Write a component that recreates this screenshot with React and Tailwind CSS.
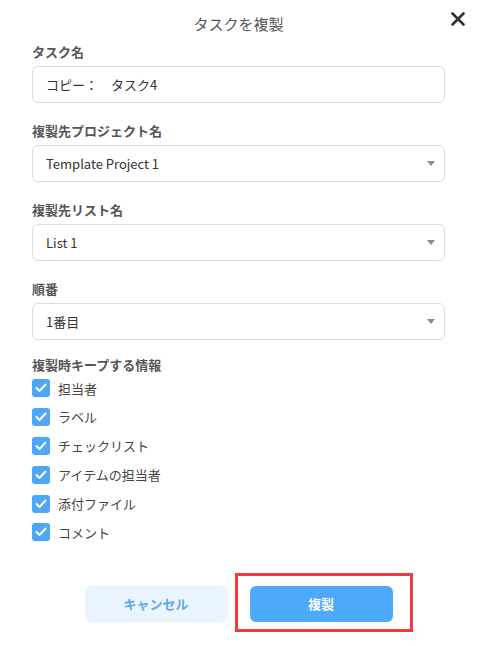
import React, { useState } from "react";

const font = { fontFamily: '"Noto Sans CJK JP", "Noto Sans", sans-serif' };

const keepItems = ["担当者", "ラベル", "チェックリスト", "アイテムの担当者", "添付ファイル", "コメント"];

function Field({ label, children }) {
  return (
    <div className="mb-[18px]">
      <div className="mb-1 h-5 text-[13px] font-bold leading-5 text-[#555]">{label}</div>
      {children}
    </div>
  );
}

function SelectBox({ value }) {
  return (
    <div className="flex h-[37px] items-center justify-between rounded-md border border-[#dcdcdc] bg-white pl-[13px] pr-[9px] text-[13px] text-[#333]">
      <span>{value}</span>
      <svg width="8" height="5" viewBox="0 0 8 5">
        <path d="M0 0h8L4 5z" fill="#8a8a8a" />
      </svg>
    </div>
  );
}

export default function App() {
  const [checked, setChecked] = useState(keepItems.map(() => true));

  return (
    <div className="min-h-[646px] w-full bg-white px-8" style={font}>
      {/* header */}
      <div className="relative flex h-[42px] items-start justify-center pt-[14px]">
        <h1 className="text-[15px] leading-5 text-[#555]">タスクを複製</h1>
        <button className="absolute right-[-20px] top-[12px] p-0">
          <svg width="14" height="14" viewBox="0 0 14 14">
            <path d="M1.5 1.5l11 11M12.5 1.5l-11 11" stroke="#333" strokeWidth="2.6" strokeLinecap="round" />
          </svg>
        </button>
      </div>

      <Field label="タスク名">
        <div className="flex h-[37px] items-center rounded-md border border-[#dcdcdc] pl-[13px] text-[13px] text-[#333]">
          コピー：　タスク4
        </div>
      </Field>

      <Field label="複製先プロジェクト名">
        <SelectBox value="Template Project 1" />
      </Field>

      <Field label="複製先リスト名">
        <SelectBox value="List 1" />
      </Field>

      <Field label="順番">
        <SelectBox value="1番目" />
      </Field>

      {/* keep options */}
      <div className="-mt-[2px] h-[18px] text-[13px] font-bold leading-[18px] text-[#555]">複製時キープする情報</div>
      <div className="flex flex-col">
        {keepItems.map((item, i) => (
          <label key={item} className="flex h-[28.8px] cursor-pointer items-center gap-2 text-[13px] text-[#444]">
            <span
              onClick={() => setChecked(checked.map((c, j) => (j === i ? !c : c)))}
              className="flex h-[18px] w-[18px] items-center justify-center rounded-[3px] bg-[#4ea6f6]"
            >
              {checked[i] && (
                <svg width="12" height="10" viewBox="0 0 12 10">
                  <path d="M1.5 5l3 3L10.5 1.5" fill="none" stroke="#fff" strokeWidth="2" strokeLinecap="round" strokeLinejoin="round" />
                </svg>
              )}
            </span>
            {item}
          </label>
        ))}
      </div>

      {/* footer */}
      <div className="mt-[39px] flex justify-center gap-[22px]">
        <button className="h-9 w-[143px] rounded-md bg-[#eaf4fe] text-[13px] font-bold text-[#5aa8ef]">キャンセル</button>
        <div className="relative">
          <button className="h-9 w-[143px] rounded-md bg-[#4da9fb] text-[13px] font-bold text-white">複製</button>
          <span className="pointer-events-none absolute bottom-[-10px] left-[-15px] right-[-20px] top-[-13px] border-[3px] border-[#f23a3a]" />
        </div>
      </div>
    </div>
  );
}
